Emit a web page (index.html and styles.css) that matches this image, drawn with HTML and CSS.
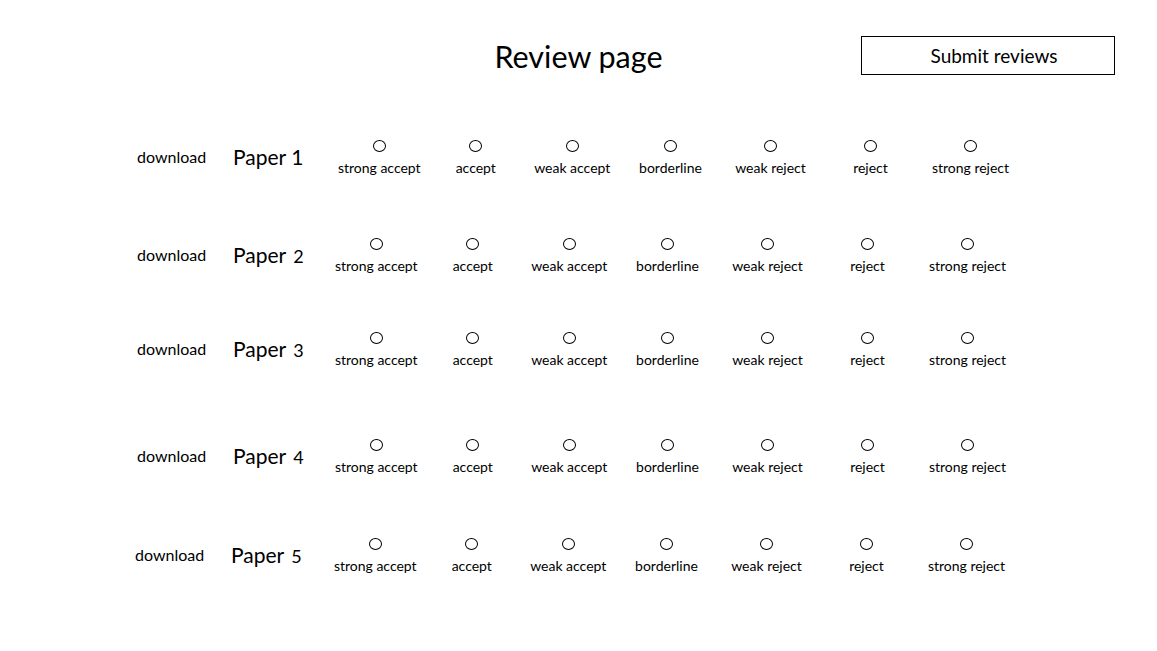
FILE: index.html
```html
<!DOCTYPE html>
<html lang="en">
<head>
<meta charset="utf-8">
<title>Review page</title>
<link rel="stylesheet" href="styles.css">
</head>
<body>
<div class="page">
  <header class="header">
    <div class="spacer"></div>
    <h1 class="title">Review page</h1>
    <div class="actions"><button class="submit" type="button">Submit reviews</button></div>
  </header>
  <main class="list">
    <div class="row row-1">
      <a class="download">download</a>
      <div class="paper">Paper 1</div>
      <div class="options">
        <label class="opt"><span class="radio"></span><span class="lbl">strong accept</span></label>
        <label class="opt"><span class="radio"></span><span class="lbl">accept</span></label>
        <label class="opt"><span class="radio"></span><span class="lbl">weak accept</span></label>
        <label class="opt"><span class="radio"></span><span class="lbl">borderline</span></label>
        <label class="opt"><span class="radio"></span><span class="lbl">weak reject</span></label>
        <label class="opt"><span class="radio"></span><span class="lbl">reject</span></label>
        <label class="opt"><span class="radio"></span><span class="lbl">strong reject</span></label>
      </div>
    </div>
    <div class="row row-2">
      <a class="download">download</a>
      <div class="paper">Paper<span class="num">2</span></div>
      <div class="options">
        <label class="opt"><span class="radio"></span><span class="lbl">strong accept</span></label>
        <label class="opt"><span class="radio"></span><span class="lbl">accept</span></label>
        <label class="opt"><span class="radio"></span><span class="lbl">weak accept</span></label>
        <label class="opt"><span class="radio"></span><span class="lbl">borderline</span></label>
        <label class="opt"><span class="radio"></span><span class="lbl">weak reject</span></label>
        <label class="opt"><span class="radio"></span><span class="lbl">reject</span></label>
        <label class="opt"><span class="radio"></span><span class="lbl">strong reject</span></label>
      </div>
    </div>
    <div class="row row-3">
      <a class="download">download</a>
      <div class="paper">Paper<span class="num">3</span></div>
      <div class="options">
        <label class="opt"><span class="radio"></span><span class="lbl">strong accept</span></label>
        <label class="opt"><span class="radio"></span><span class="lbl">accept</span></label>
        <label class="opt"><span class="radio"></span><span class="lbl">weak accept</span></label>
        <label class="opt"><span class="radio"></span><span class="lbl">borderline</span></label>
        <label class="opt"><span class="radio"></span><span class="lbl">weak reject</span></label>
        <label class="opt"><span class="radio"></span><span class="lbl">reject</span></label>
        <label class="opt"><span class="radio"></span><span class="lbl">strong reject</span></label>
      </div>
    </div>
    <div class="row row-4">
      <a class="download">download</a>
      <div class="paper">Paper<span class="num">4</span></div>
      <div class="options">
        <label class="opt"><span class="radio"></span><span class="lbl">strong accept</span></label>
        <label class="opt"><span class="radio"></span><span class="lbl">accept</span></label>
        <label class="opt"><span class="radio"></span><span class="lbl">weak accept</span></label>
        <label class="opt"><span class="radio"></span><span class="lbl">borderline</span></label>
        <label class="opt"><span class="radio"></span><span class="lbl">weak reject</span></label>
        <label class="opt"><span class="radio"></span><span class="lbl">reject</span></label>
        <label class="opt"><span class="radio"></span><span class="lbl">strong reject</span></label>
      </div>
    </div>
    <div class="row row-5">
      <a class="download">download</a>
      <div class="paper">Paper<span class="num">5</span></div>
      <div class="options">
        <label class="opt"><span class="radio"></span><span class="lbl">strong accept</span></label>
        <label class="opt"><span class="radio"></span><span class="lbl">accept</span></label>
        <label class="opt"><span class="radio"></span><span class="lbl">weak accept</span></label>
        <label class="opt"><span class="radio"></span><span class="lbl">borderline</span></label>
        <label class="opt"><span class="radio"></span><span class="lbl">weak reject</span></label>
        <label class="opt"><span class="radio"></span><span class="lbl">reject</span></label>
        <label class="opt"><span class="radio"></span><span class="lbl">strong reject</span></label>
      </div>
    </div>
  </main>
</div>
</body>
</html>
```

FILE: styles.css
```css
html, body {
  margin: 0;
  padding: 0;
  background: #ffffff;
}

body {
  font-family: Lato, "Open Sans", "Liberation Sans", sans-serif;
  color: #000000;
}

.page {
  width: 1157px;
  height: 651px;
  overflow: hidden;
}

.header {
  display: grid;
  grid-template-columns: 1fr auto 1fr;
  align-items: center;
  padding-top: 36px;
  height: 38px;
}

.title {
  margin: 0;
  font-size: 30.5px;
  font-weight: 400;
  line-height: 38px;
}

.actions {
  display: flex;
  justify-content: flex-end;
  padding-right: 42px;
}

.submit {
  width: 254px;
  height: 39px;
  border: 1px solid #000000;
  background: #ffffff;
  font-family: inherit;
  font-size: 19px;
  color: #000000;
  padding: 0 0 0 12px;
  margin: 0;
}

.list {
  display: flex;
  flex-direction: column;
}

.row {
  display: flex;
  align-items: center;
  height: 40px;
  padding-left: 137px;
}

.row-1 { margin-top: 63px; }
.row-2 { margin-top: 58px; }
.row-3 { margin-top: 54px; }
.row-4 { margin-top: 67px; }
.row-5 { margin-top: 59px; padding-left: 135px; }

.download {
  width: 96px;
  font-size: 16px;
  line-height: 20px;
  color: #000000;
}

.paper {
  width: 98px;
  font-size: 21px;
  line-height: 24px;
  white-space: nowrap;
}

.num {
  font-size: 18px;
  margin-left: 7px;
}

.options {
  display: flex;
  margin-top: 2px;
}

.row-2 .options,
.row-3 .options,
.row-4 .options { margin-left: -3px; }
.row-5 .options { margin-left: -2px; }

.opt {
  width: 96.5px;
  display: flex;
  flex-direction: column;
  align-items: center;
}

.opt:nth-child(n+4) {
  width: 100px;
}

.radio {
  display: block;
  width: 11px;
  height: 10px;
  border: 1px solid #000000;
  border-radius: 50%;
  box-sizing: content-box;
}

.lbl {
  display: block;
  margin-top: 7px;
  font-size: 14px;
  line-height: 17px;
  white-space: nowrap;
}
```
